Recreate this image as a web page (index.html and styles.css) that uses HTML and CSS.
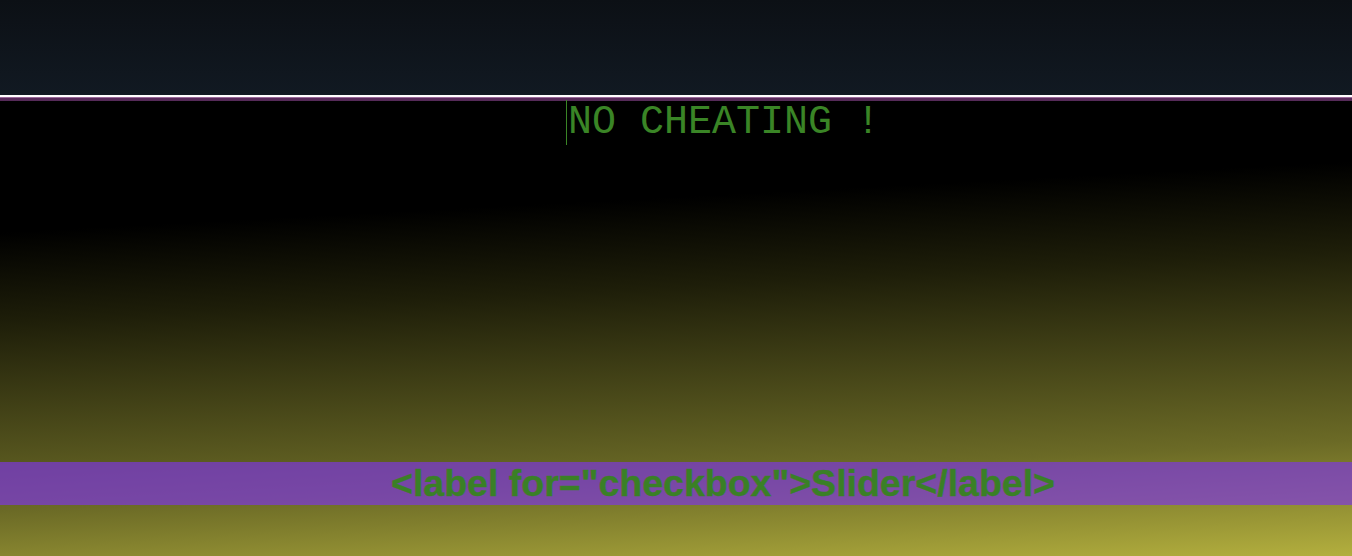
FILE: index.html
```html
<!DOCTYPE html>
<html>
<head>
<meta charset="utf-8">
<link rel="stylesheet" href="styles.css">
</head>
<body>
<header class="topbar"></header>
<div class="divider"></div>
<main class="stage">
  <div class="title-row">
    <div class="typer">NO CHEATING !</div>
  </div>
  <div class="label-bar">
    <span class="label-text">&lt;label for="checkbox"&gt;Slider&lt;/label&gt;</span>
  </div>
</main>
</body>
</html>
```
FILE: styles.css
```css
html, body {
  margin: 0;
  padding: 0;
  width: 1352px;
  height: 556px;
  overflow: hidden;
  background: #000;
}

.topbar {
  height: 95px;
  background: linear-gradient(to bottom, #0c1015 0%, #111922 100%);
  border-bottom: 2px solid #ffffff;
}

.divider {
  height: 4px;
  background: linear-gradient(to bottom, #9a6a9a 0px, #9a6a9a 1px, #5a2c5c 1px, #552a58 4px);
}

.stage {
  height: 455px;
  display: flex;
  flex-direction: column;
  background: linear-gradient(177deg, #000000 0%, #000000 25%, #1e1e09 42%, #6b6a26 78%, #b3af3e 100%);
}

.title-row {
  padding-left: 94px;
  display: flex;
  justify-content: center;
  margin-top: -1px;
}

.typer {
  font-family: "Liberation Mono", "Courier New", monospace;
  font-size: 40px;
  line-height: 45px;
  color: #3a8526;
  border-left: 1px solid #3a8526;
  padding-left: 1px;
  white-space: nowrap;
}

.label-bar {
  margin-top: auto;
  margin-bottom: 51px;
  height: 43px;
  padding-left: 94px;
  display: flex;
  align-items: center;
  justify-content: center;
  background: rgba(126, 53, 228, 0.67);
}

.label-text {
  font-family: "Liberation Sans", Arial, sans-serif;
  font-weight: bold;
  font-size: 37.5px;
  color: #3a8026;
  -webkit-text-stroke: 0.4px #3a8026;
  white-space: nowrap;
}
```
